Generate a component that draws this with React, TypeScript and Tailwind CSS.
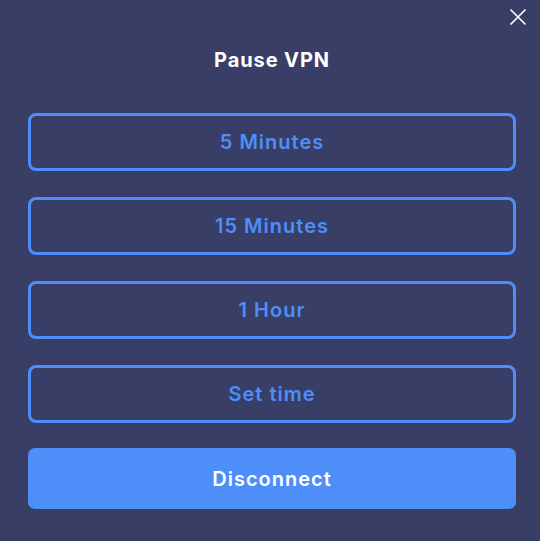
import React from 'react'

const options = ['5 Minutes', '15 Minutes', '1 Hour', 'Set time']

export default function App() {
  return (
    <div
      className="relative w-[540px] h-[541px] bg-[#393e67] overflow-hidden"
      style={{ fontFamily: 'Inter, "Noto Sans", sans-serif' }}
    >
      <button className="absolute top-[7px] right-[12px] w-[20px] h-[20px] flex items-center justify-center">
        <svg width="18" height="18" viewBox="0 0 18 18" fill="none" stroke="#ffffff" strokeWidth="1.6">
          <path d="M1.5 1.5 L16.5 16.5 M16.5 1.5 L1.5 16.5" />
        </svg>
      </button>

      <div className="flex flex-col pl-[28px] pr-[24px] pt-[47px]">
        <h1 className="text-center text-white text-[20px] font-bold leading-[26px] tracking-[0.9px]">Pause VPN</h1>

        <div className="flex flex-col gap-[26px] mt-[40px]">
          {options.map((o) => (
            <button
              key={o}
              className="h-[58px] w-full rounded-[8px] border-[3px] border-[#4d8ef8] text-[#4d8ef8] text-[20px] font-semibold tracking-[1px]"
            >
              {o}
            </button>
          ))}
        </div>

        <button className="mt-[25px] h-[61px] w-full rounded-[7px] bg-[#4d8ef8] text-white text-[20px] font-semibold tracking-[1px]">
          Disconnect
        </button>
      </div>
    </div>
  )
}
